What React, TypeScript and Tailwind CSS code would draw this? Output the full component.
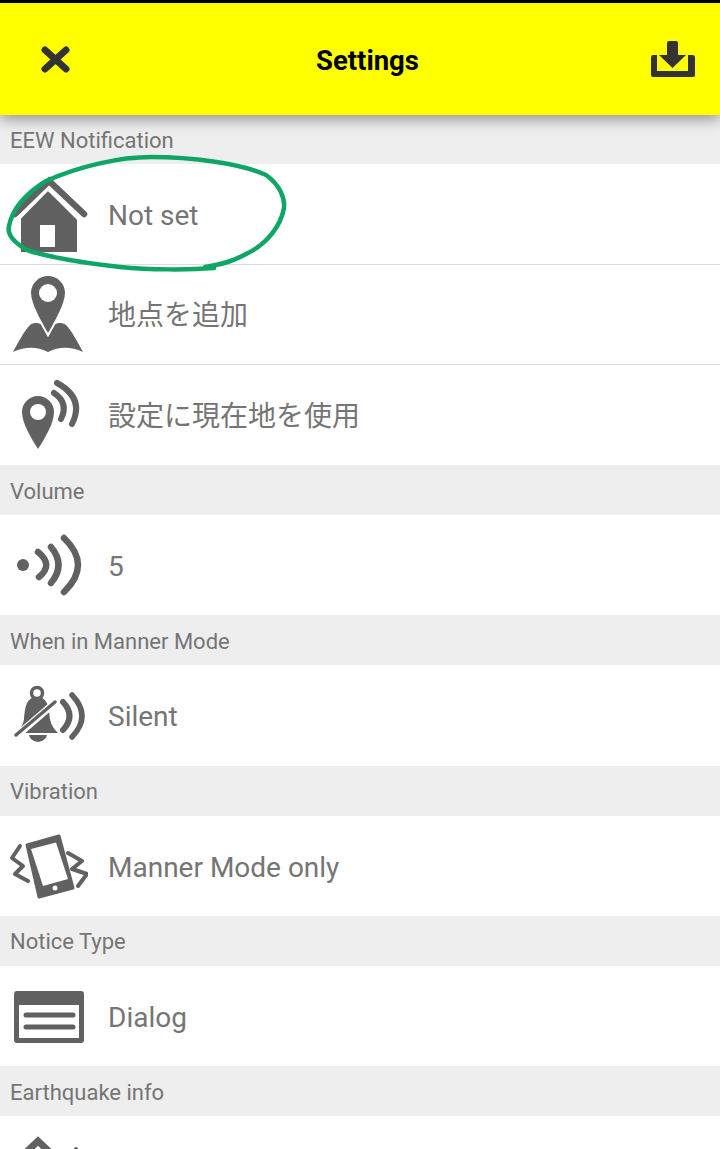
import { ReactNode } from "react";

const fontStack = "font-['Roboto','Noto_Sans_CJK_JP',sans-serif]";

function IconBox({ children }: { children: ReactNode }) {
  return (
    <svg viewBox="0 0 80 80" className="ml-2 mr-5 h-20 w-20 shrink-0 text-[#616161]" fill="currentColor">
      {children}
    </svg>
  );
}

function HomeIcon() {
  return (
    <IconBox>
      <path d="M40 17 L13 44 V78 H69 V44 Z" />
      <path d="M32 51 H47 V73 H32 Z" fill="#fff" />
      <path d="M8 48 L40 15 L73 48" fill="none" stroke="#fff" strokeWidth="2.5" />
      <path d="M7 40 L41 7 L76 40" fill="none" stroke="currentColor" strokeWidth="6.5" strokeLinecap="round" />
    </IconBox>
  );
}

function MapPinIcon() {
  return (
    <IconBox>
      <g transform="translate(0 1)">
        <path d="M5 77 C10 68 16 56 22 50 C26 47 30 48 33 49 L40 62 L47 49 C50 48 54 47 58 50 C64 56 70 68 75 77 C62 71 50 72 40 77 C30 72 18 71 5 77 Z" />
        <path d="M23 18 A17 17 0 0 1 57 18 C57 28 47 46 40 58 C33 46 23 28 23 18 Z" stroke="#fff" strokeWidth="4" paintOrder="stroke" />
        <circle cx="40" cy="18" r="9" fill="#fff" />
      </g>
    </IconBox>
  );
}

function PinSignalIcon() {
  return (
    <IconBox>
      <path d="M14 37 A16 16 0 0 1 46 37 C46 48 37 63 30 74 C23 63 14 48 14 37 Z" />
      <circle cx="30" cy="37" r="8" fill="#fff" />
      <path d="M46 18 Q61 28 53 44" fill="none" stroke="currentColor" strokeWidth="6" strokeLinecap="round" />
      <path d="M49 8 Q77 23 64 49" fill="none" stroke="currentColor" strokeWidth="6" strokeLinecap="round" />
    </IconBox>
  );
}

function VolumeIcon() {
  return (
    <IconBox>
      <circle cx="15" cy="40" r="6" />
      <path d="M30 27 Q46 40 31 52" fill="none" stroke="currentColor" strokeWidth="6.5" strokeLinecap="round" />
      <path d="M43 22 Q58 40 43 58" fill="none" stroke="currentColor" strokeWidth="6.5" strokeLinecap="round" />
      <path d="M56 13 Q84 40 56 67" fill="none" stroke="currentColor" strokeWidth="6.5" strokeLinecap="round" />
    </IconBox>
  );
}

function SilentIcon() {
  return (
    <IconBox>
      <circle cx="29" cy="18" r="5.5" fill="none" stroke="currentColor" strokeWidth="3.5" />
      <path d="M29 22 C17 22 17 36 16 44 C15 51 12 55 8 58 H50 C46 54 43 50 42 44 C41 36 41 22 29 22 Z" />
      <path d="M21 60 H39 C37 69 23 69 21 60 Z" />
      <path d="M6 63 L50 25" fill="none" stroke="#fff" strokeWidth="7" />
      <path d="M8 60 L47 27" fill="none" stroke="currentColor" strokeWidth="3.5" strokeLinecap="round" />
      <path d="M55 27 Q68 41 55 55" fill="none" stroke="currentColor" strokeWidth="6" strokeLinecap="round" />
      <path d="M64 20 Q84 41 64 62" fill="none" stroke="currentColor" strokeWidth="5.5" strokeLinecap="round" />
    </IconBox>
  );
}

function PhoneShakeIcon() {
  return (
    <IconBox>
      <path d="M19 19 L51 10 L65 62 L31 71 Z" stroke="currentColor" strokeWidth="3" strokeLinejoin="round" />
      <path d="M23 23 L48 16.5 L60 53 L35 60 Z" fill="#fff" />
      <circle cx="47" cy="62" r="2.5" fill="#fff" />
      <path d="M12 20 L4 32 L15 40 L7 48 L20 55" fill="none" stroke="currentColor" strokeWidth="4" strokeLinecap="round" strokeLinejoin="round" />
      <path d="M60 27 L74 35 L64 43 L79 48 L70 60" fill="none" stroke="currentColor" strokeWidth="4" strokeLinecap="round" strokeLinejoin="round" />
    </IconBox>
  );
}

function DialogIcon() {
  return (
    <IconBox>
      <rect x="6" y="15" width="70" height="52" rx="3" />
      <rect x="11" y="29" width="60" height="33" fill="#fff" />
      <path d="M18 39 H65 M18 51 H65" stroke="currentColor" strokeWidth="5" strokeLinecap="round" />
    </IconBox>
  );
}

function QuakeHomeIcon() {
  return (
    <IconBox>
      <path d="M8 36 L30 15 L52 36" fill="none" stroke="currentColor" strokeWidth="7" />
      <circle cx="68" cy="23" r="2" />
    </IconBox>
  );
}

function Section({ title, first }: { title: string; first?: boolean }) {
  return (
    <div className={`flex items-center bg-[#eeeeee] pl-[10px] pt-[2px] text-[22px] text-[#757575] ${first ? "h-[49.25px]" : "h-[50px]"}`}>
      {title}
    </div>
  );
}

function Row({ icon, label, divider }: { icon: ReactNode; label: string; divider?: boolean }) {
  return (
    <div className={`flex h-[100.25px] items-center bg-white text-[28px] text-[#757575] ${divider ? "border-b border-[#dddddd]" : ""}`}>
      {icon}
      <span className="pt-1">{label}</span>
    </div>
  );
}

export default function App() {
  return (
    <div className={`relative h-[1149px] w-[720px] overflow-hidden bg-white ${fontStack}`}>
      <header className="relative z-10 flex h-[115px] items-center justify-between border-t-[3px] border-black bg-[#ffff00] pl-[41px] pr-[25px] shadow-[0_4px_14px_rgba(0,0,0,0.4)]">
        <svg viewBox="0 0 29 27" className="h-[27px] w-[29px]">
          <path d="M4 4 L25 23 M25 4 L4 23" stroke="#333" strokeWidth="7" strokeLinecap="round" />
        </svg>
        <span className="ml-[14px] pt-[3px] text-[27.5px] font-bold text-black">Settings</span>
        <svg viewBox="0 0 44 36" className="h-9 w-11" fill="#333">
          <path d="M16 2 Q16 0 18 0 H25 Q27 0 27 2 V14 H35 L21.5 27 L8 14 H16 Z" />
          <path d="M0 16 Q0 14 2 14 H6 V30 H37 V14 H41 Q44 14 44 16 V34 Q44 36 42 36 H2 Q0 36 0 34 Z" />
        </svg>
      </header>

      <Section title="EEW Notification" first />
      <Row icon={<HomeIcon />} label="Not set" divider />
      <Row icon={<MapPinIcon />} label="地点を追加" divider />
      <Row icon={<PinSignalIcon />} label="設定に現在地を使用" />
      <Section title="Volume" />
      <Row icon={<VolumeIcon />} label="5" />
      <Section title="When in Manner Mode" />
      <Row icon={<SilentIcon />} label="Silent" />
      <Section title="Vibration" />
      <Row icon={<PhoneShakeIcon />} label="Manner Mode only" />
      <Section title="Notice Type" />
      <Row icon={<DialogIcon />} label="Dialog" />
      <Section title="Earthquake info" />
      <Row icon={<QuakeHomeIcon />} label="" />

      {/* hand drawn marker over the first row */}
      <svg viewBox="0 0 300 130" className="absolute left-0 top-[150px] z-20 h-[130px] w-[300px]" fill="none">
        <path
          d="M214 118 C190 120 150 120 120 117 C85 113 50 108 27 100 C13 92 7 84 9 76 C13 56 30 41 46 31 C80 16 120 7 151 7 C190 7 240 13 266 25 C280 35 285 48 284 58 C281 75 268 93 248 103 C235 110 225 114 205 117"
          stroke="#0fa565"
          strokeWidth="4.5"
          strokeLinecap="round"
        />
      </svg>
    </div>
  );
}
